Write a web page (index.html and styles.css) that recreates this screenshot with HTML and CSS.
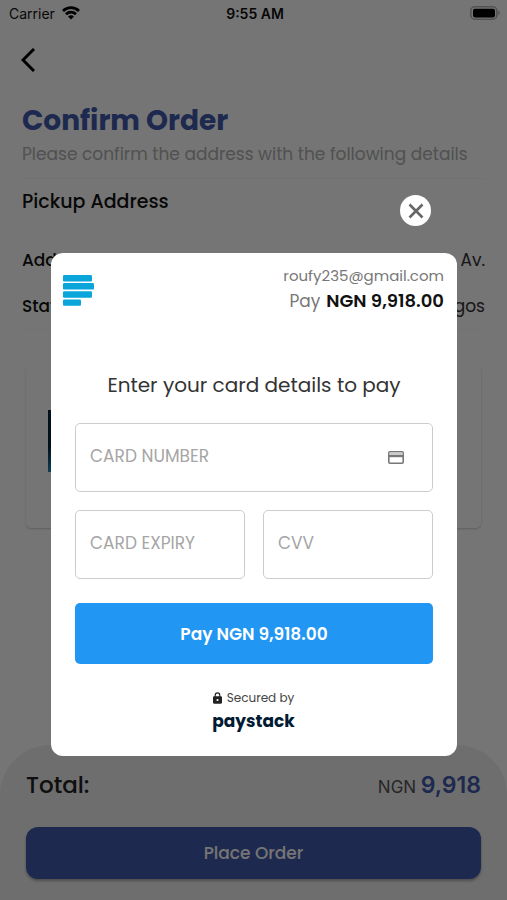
FILE: index.html
```html
<!DOCTYPE html>
<html lang="en">
<head>
<meta charset="utf-8">
<meta name="viewport" content="width=device-width, initial-scale=1">
<title>Confirm Order</title>
<link rel="stylesheet" href="styles.css">
</head>
<body>
<div class="page">
  <header class="status">
    <div class="carrier">
      <span>Carrier</span>
      <svg width="18" height="14" viewBox="0 0 18 14" fill="none" stroke="#000" stroke-width="2.8" aria-hidden="true">
        <path d="M1 4.900a11.400 11.400 0 0 1 16 0"/>
        <path d="M4 8.200a7.100 7.100 0 0 1 10 0"/>
        <path d="M9 13.600 6 10.600a4.300 4.300 0 0 1 6 0z" fill="#000" stroke="none"/>
      </svg>
    </div>
    <time class="clock">9:55 AM</time>
    <svg class="battery" width="31" height="14" viewBox="0 0 31 14" aria-hidden="true">
      <rect x=".8" y=".8" width="26" height="12.400" rx="4" fill="none" stroke="#b4b4b4" stroke-width="1.600"/>
      <rect x="3" y="2.800" width="22" height="8.600" rx="1.800" fill="#000"/>
      <path d="M28.300 4.800c2 .7 2 3.700 0 4.400z" fill="#b4b4b4"/>
    </svg>
  </header>
  <main class="content">
    <button class="back" type="button" aria-label="Back">
      <svg width="14" height="24" viewBox="0 0 14 24" fill="none" stroke="#000" stroke-width="3" aria-hidden="true"><path d="M13 1 2 12l11 11"/></svg>
    </button>
    <h1 class="title">Confirm Order</h1>
    <p class="subtitle">Please confirm the address with the following details</p>
    <h2 class="section">Pickup Address</h2>
    <dl class="details">
      <div class="row"><dt>Address</dt><dd>Av.</dd></div>
      <div class="row"><dt>State</dt><dd>Lagos</dd></div>
    </dl>
    <div class="item"><div class="thumb"></div></div>
  </main>
  <footer class="summary">
    <div class="total">
      <span class="total-label">Total:</span>
      <span class="amount"><span class="currency">NGN</span> <strong>9,918</strong></span>
    </div>
    <button class="order" type="button">Place Order</button>
  </footer>
</div>

<div class="scrim">
  <button class="close" type="button" aria-label="Close">
    <svg width="16" height="16" viewBox="0 0 16 16" fill="none" stroke="#666" stroke-width="2.6" aria-hidden="true"><path d="m1.500 1.500 13 13m0-13-13 13"/></svg>
  </button>
  <section class="dialog" role="dialog" aria-label="Card payment">
    <div class="merchant">
      <svg width="31" height="31" viewBox="0 0 31 31" fill="#09a5db" aria-hidden="true">
        <rect width="29" height="6.500" rx="1.200"/>
        <rect y="8" width="31" height="6.500" rx="1.200"/>
        <rect y="16.200" width="29" height="6.500" rx="1.200"/>
        <rect y="24.400" width="18" height="6.300" rx="1.200"/>
      </svg>
      <div class="payer">
        <div class="email">roufy235@gmail.com</div>
        <div class="due"><span>Pay</span><strong>NGN 9,918.00</strong></div>
      </div>
    </div>
    <form class="form">
      <h2 class="prompt">Enter your card details to pay</h2>
      <div class="field">
        <input type="text" aria-label="Card number" placeholder="CARD NUMBER">
        <svg class="card-icon" width="16" height="13" viewBox="0 0 16 13" aria-hidden="true">
          <rect x=".8" y=".8" width="14.400" height="11.400" rx="1.200" fill="none" stroke="#777" stroke-width="1.600"/>
          <path d="M1.500 1.500h13v2.500h-13z" fill="#ccc"/>
          <path d="M1 4h14v2.200H1z" fill="#777"/>
        </svg>
      </div>
      <div class="pair">
        <div class="field"><input type="text" aria-label="Card expiry" placeholder="CARD EXPIRY"></div>
        <div class="field"><input type="text" aria-label="CVV" placeholder="CVV"></div>
      </div>
      <button class="pay" type="button">Pay NGN 9,918.00</button>
    </form>
    <div class="secured">
      <div class="secured-by">
        <svg width="9" height="12" viewBox="0 0 9 12" aria-hidden="true">
          <path d="M2.200 5V3.200a2.300 2.300 0 0 1 4.600 0V5" fill="none" stroke="#222" stroke-width="1.100"/>
          <rect y="4.200" width="9" height="7.500" rx="1.100" fill="#222"/>
          <circle cx="4.500" cy="8" r="1.100" fill="#fff"/>
        </svg>
        <span>Secured by</span>
      </div>
      <div class="brand">paystack</div>
    </div>
  </section>
</div>
</body>
</html>
```
FILE: styles.css
```css
* { box-sizing: border-box; margin: 0; }
body { font-family: Poppins, Inter, "Open Sans", sans-serif; color: #111; background: #fff; }
button, input { font: inherit; }
button { border: 0; padding: 0; }
svg { display: block; flex: none; }

.page { min-height: 100vh; display: flex; flex-direction: column; }
.status { display: grid; grid-template-columns: 1fr auto 1fr; align-items: center; height: 26px; padding: 0 6px 0 9px; font-size: 14px; font-family: Inter, sans-serif; }
.carrier { display: flex; align-items: center; gap: 7px; }
.clock { font-weight: 600; }
.battery { justify-self: end; }

.content { padding: 0 22px; }
.back { display: block; background: none; margin: 22px 0 0 -1px; height: 24px; }
.title { margin-top: 31px; font-size: 28px; line-height: 36px; font-weight: 700; color: #4159ac; }
.subtitle { padding: 3px 0 12px; font-size: 17px; line-height: 24px; color: #b0b0b0; border-bottom: 1px solid #f6f6f6; white-space: nowrap; }
.section { margin-top: 8px; font-size: 19px; line-height: 30px; font-weight: 500; }
.details { margin-top: 30px; padding-bottom: 10px; border-bottom: 1px solid #f8f8f8; }
.row { display: flex; justify-content: space-between; height: 46px; font-size: 17px; line-height: 26px; }
.row:last-child { height: 26px; }
.row dt { font-weight: 500; }
.row dd { color: #333; }
.item { margin: 34px 4px 0; height: 164px; padding: 46px 22px; border-radius: 5px; box-shadow: 0 1px 2px rgba(0, 0, 0, .2); }
.thumb { width: 70px; height: 62px; background: linear-gradient(#052840 60%, #1c88c0); }

.summary { margin-top: auto; padding: 22px 26px 21px; background: #f0f0f0; border-radius: 50px 50px 0 0; }
.total { display: flex; justify-content: space-between; align-items: baseline; line-height: 36px; color: #222; }
.total-label { font-size: 23px; font-weight: 500; }
.amount { font-family: Inter, sans-serif; }
.currency { font-size: 17px; color: #555; }
.amount strong { font-size: 23px; font-weight: 600; color: #4159ac; }
.order { display: block; width: 100%; height: 52px; margin-top: 22px; border-radius: 12px; background: #4159ac; color: #fff; font-size: 17px; font-weight: 500; box-shadow: 0 2px 3px rgba(0, 0, 0, .3); }

.scrim { position: fixed; inset: 0; padding: 195px 50px 0 51px; background: rgba(0, 0, 0, .54); }
.close { display: grid; place-items: center; width: 31px; height: 31px; margin: 0 26px 27px auto; border-radius: 50%; background: #fff; }
.dialog { background: #fff; border-radius: 12px; padding: 12px 13px 22px 12px; }
.merchant { display: flex; justify-content: space-between; align-items: center; height: 50px; }
.payer { text-align: right; color: #777; }
.email { font-size: 15px; line-height: 22px; }
.due { display: flex; justify-content: flex-end; gap: 6px; font-size: 17px; line-height: 28px; }
.due strong { font-size: 18px; font-weight: 600; color: #111; }
.form { padding: 0 11px 0 12px; }
.prompt { margin: 55px 0 23px; font-size: 20px; line-height: 30px; font-weight: 400; text-align: center; color: #333; }
.field { display: flex; align-items: center; flex: 1; min-width: 0; height: 69px; padding: 0 28px 0 14px; border: 1px solid #ccc; border-radius: 5px; }
.field input { flex: 1; width: 100%; min-width: 0; padding: 0 0 4px; border: 0; outline: 0; background: none; font-size: 17px; color: #222; }
.field input::placeholder { color: #a5a5a5; opacity: 1; }
.pair { display: flex; gap: 18px; margin: 18px 0 24px; }
.pay { display: block; width: 100%; height: 61px; border-radius: 5px; background: #2196f3; color: #fff; font-size: 17px; font-weight: 600; }
.secured { display: flex; flex-direction: column; align-items: center; margin-top: 24px; }
.secured-by { display: flex; align-items: center; gap: 5px; font-size: 12px; line-height: 20px; color: #444; }
.brand { font-size: 17px; line-height: 26px; font-weight: 700; color: #011b33; }
```
